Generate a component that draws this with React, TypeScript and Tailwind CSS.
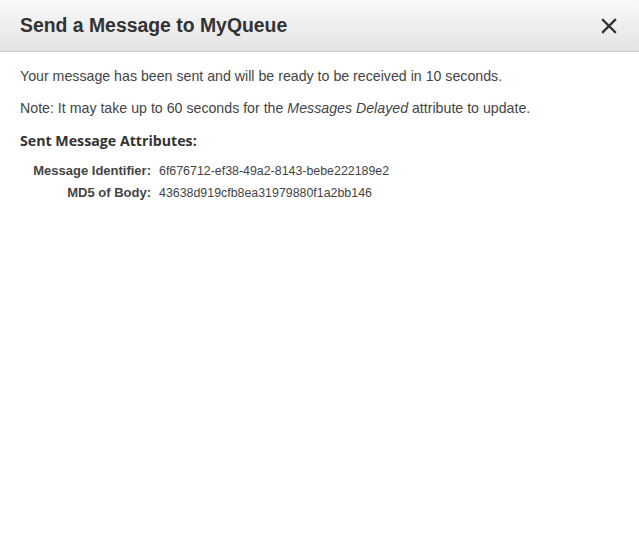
import React from "react";

export default function App() {
  return (
    <div className="w-[639px] h-[553px] bg-white text-[#444] font-['Liberation_Sans',Arial,sans-serif]">
      <div className="h-[52px] flex items-center justify-between pl-5 pr-[22px] border-b border-[#c8c8c8] bg-gradient-to-b from-[#fafafa] to-[#e3e3e3]">
        <h1 className="text-[19.4px] font-bold text-[#333]">Send a Message to MyQueue</h1>
        <svg width="16" height="16" viewBox="0 0 16 16" className="text-[#333]">
          <path d="M2 2 L14 14 M14 2 L2 14" stroke="currentColor" strokeWidth="2.4" strokeLinecap="square" />
        </svg>
      </div>
      <div className="px-5 pt-[15px] text-[14.2px] leading-[18px]">
        <p>Your message has been sent and will be ready to be received in 10 seconds.</p>
        <p className="mt-[14px]">
          Note: It may take up to 60 seconds for the <i>Messages Delayed</i> attribute to update.
        </p>
        <h2 className="mt-[15px] font-['Open_Sans',sans-serif] font-bold text-[14.2px] text-[#333]">Sent Message Attributes:</h2>
        <div className="mt-[10px] grid grid-cols-[131px_1fr] gap-x-2 text-[12.4px] leading-[22px]">
          <div className="text-right font-bold text-[13px]">Message Identifier:</div>
          <div>6f676712-ef38-49a2-8143-bebe222189e2</div>
          <div className="text-right font-bold text-[13px]">MD5 of Body:</div>
          <div>43638d919cfb8ea31979880f1a2bb146</div>
        </div>
      </div>
    </div>
  );
}
